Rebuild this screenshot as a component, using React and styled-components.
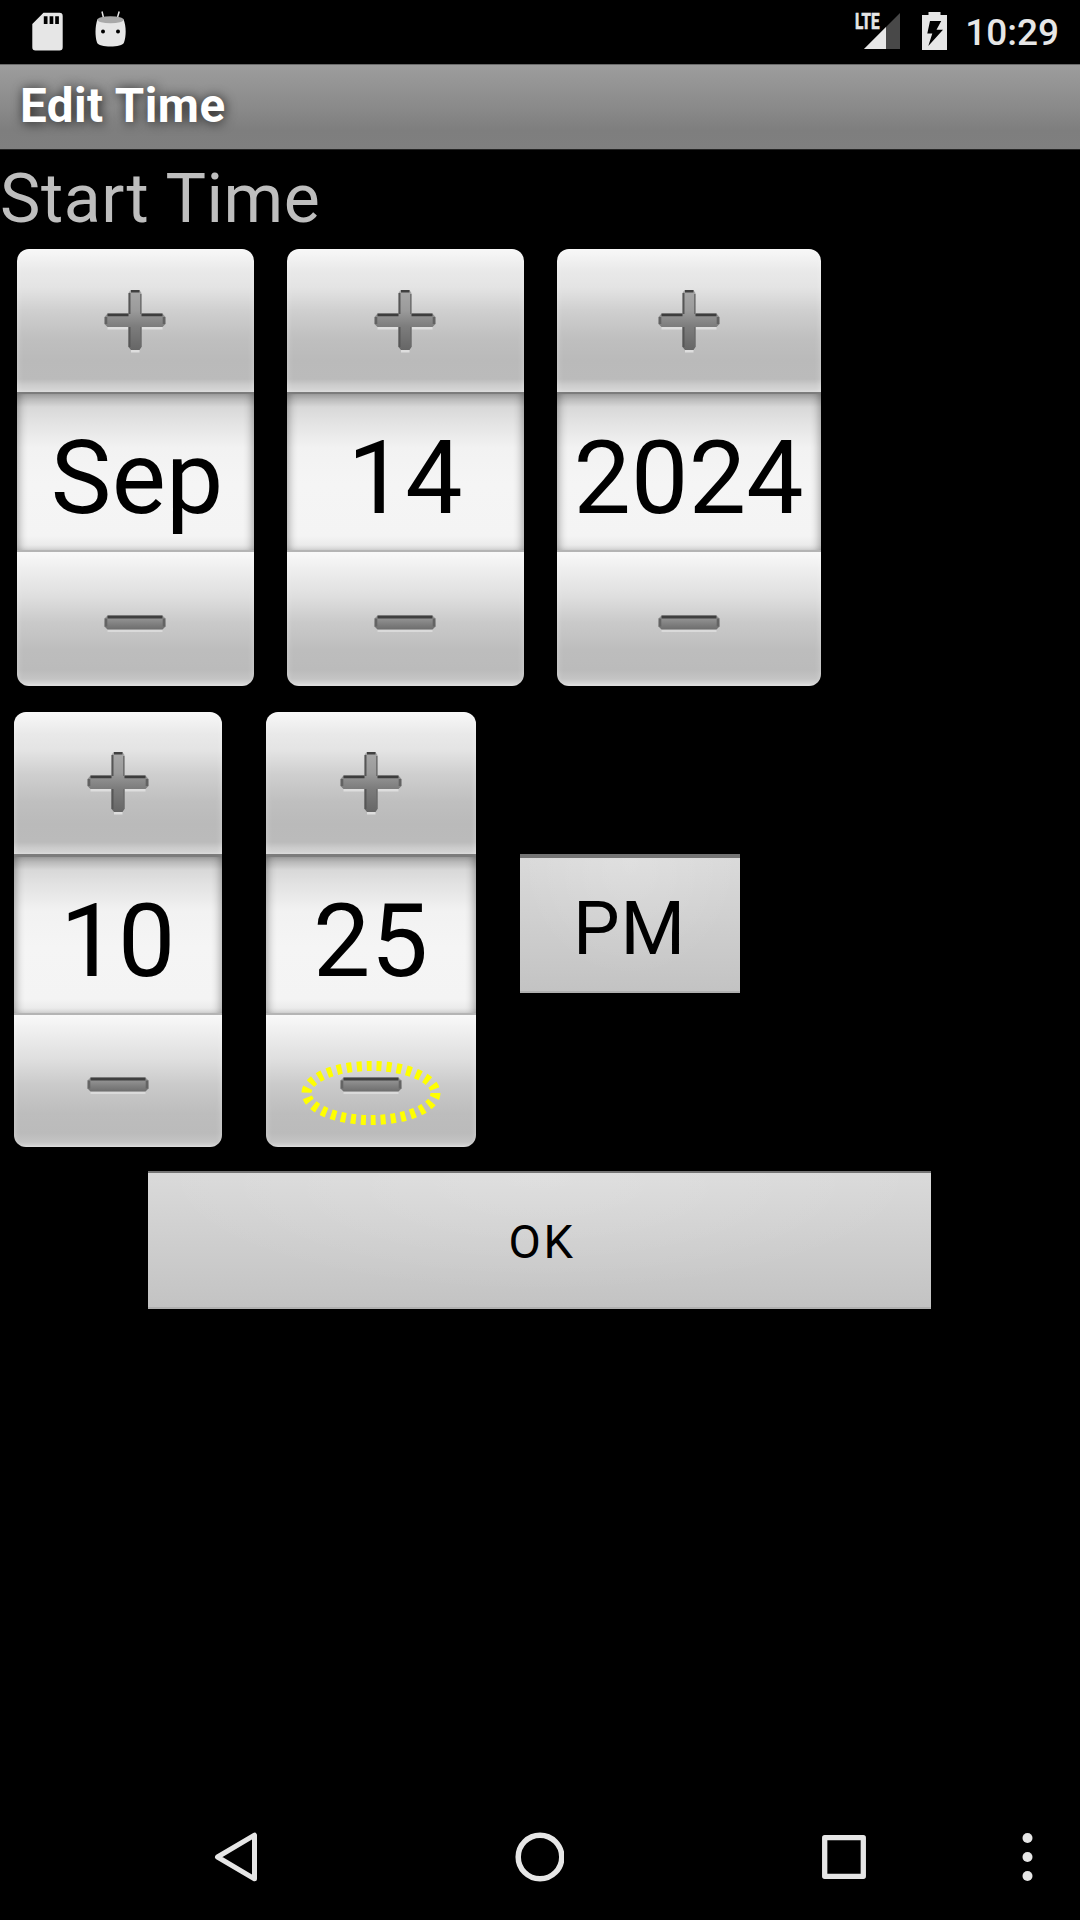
import React from "react";
import styled, { createGlobalStyle } from "styled-components";

const GlobalStyle = createGlobalStyle`
  * { box-sizing: border-box; }
  html, body { margin: 0; padding: 0; background: #000; }
  body { font-family: Roboto, "Noto Sans", sans-serif; }
  button { font-family: inherit; border: 0; padding: 0; margin: 0; }
  svg { display: block; }
`;

const Screen = styled.div`
  width: 1080px;
  height: 1920px;
  display: flex;
  flex-direction: column;
  background: #000;
  overflow: hidden;
`;

const StatusBar = styled.header`
  height: 64px;
  flex: none;
  display: flex;
  justify-content: space-between;
  align-items: flex-start;
  padding: 0 21px 0 32px;
`;

const StatusGroup = styled.div`
  display: flex;
  height: 64px;
  gap: ${(p) => p.$gap}px;
`;

const Clock = styled.time`
  color: #e6e6e6;
  font-size: 37px;
  font-weight: 500;
  line-height: 64px;
  padding-top: 1px;
  margin-left: -3px;
`;

const TitleBar = styled.h1`
  height: 86px;
  flex: none;
  margin: 0;
  padding: 0 20px;
  border-top: 1px solid #6a6a6a;
  border-bottom: 1px solid #242424;
  background: linear-gradient(#9d9d9d 0%, #8a8a8a 50%, #7e7e7e 78%, #7f7f7f 100%);
  color: #fff;
  font-size: 47.5px;
  font-weight: 700;
  line-height: 82px;
  letter-spacing: 0.5px;
  text-shadow: 1px 1px 12px rgba(0, 0, 0, 0.8);
`;

const Content = styled.main`
  flex: 1;
  display: flex;
  flex-direction: column;
  align-items: flex-start;
`;

const SectionLabel = styled.h2`
  margin: 0;
  height: 99px;
  color: #bebebe;
  font-size: 68px;
  font-weight: 400;
  line-height: 99px;
  letter-spacing: 0.55px;
`;

const PickerRow = styled.section`
  display: flex;
  align-items: flex-start;
  gap: ${(p) => p.$gap}px;
  padding-left: ${(p) => p.$left}px;
  margin-bottom: ${(p) => p.$bottom}px;
`;

const Picker = styled.div`
  width: ${(p) => p.$width}px;
  display: flex;
  flex-direction: column;
  border-radius: 12px;
  overflow: hidden;
`;

const StepButton = styled.button`
  display: flex;
  justify-content: center;
  align-items: flex-start;
  flex: none;
`;

const IncrementButton = styled(StepButton)`
  height: ${(p) => (p.$short ? 142 : 143)}px;
  padding-top: ${(p) => (p.$short ? 39 : 40)}px;
  background: linear-gradient(
    #f8f8f8 0,
    #e9e9e9 22px,
    #e4e4e4 38px,
    #cfcfcf 62px,
    #bfbfbf 90px,
    #bababa 112px,
    #bbbbbb 130px,
    #cccccc 136px,
    #d8d8d8 143px
  );
  box-shadow: inset 3px 0 5px -1px rgba(255, 255, 255, 0.2),
    inset -3px 0 5px -1px rgba(255, 255, 255, 0.2);
`;

const DecrementButton = styled(StepButton)`
  height: ${(p) => (p.$short ? 132 : 133.5)}px;
  padding-top: ${(p) => (p.$short ? 62 : 63)}px;
  background: linear-gradient(
    #f9f9f9 0,
    #efefef 16px,
    #dfdfdf 44px,
    #cacaca 70px,
    #bdbdbd 98px,
    #bbbbbb 118px,
    #c4c4c4 127px,
    #dcdcdc 133px
  );
  box-shadow: inset 3px 0 5px -1px rgba(255, 255, 255, 0.2),
    inset -3px 0 5px -1px rgba(255, 255, 255, 0.2);
`;

const Field = styled.div`
  height: ${(p) => (p.$short ? 161 : 160)}px;
  flex: none;
  border-top: ${(p) => (p.$short ? 3 : 2)}px solid #7c7c7c;
  border-bottom: 2px solid #b4b4b4;
  background: linear-gradient(
    #acacac 0,
    #b9b9b9 5px,
    #d8d8d8 13px,
    #e2e2e2 27px,
    #f2f2f2 54px,
    #f5f5f5 90px,
    #f4f4f4 142px,
    #e4e4e4 158px
  );
  box-shadow: inset 6px 0 8px -4px rgba(0, 0, 0, 0.32),
    inset -6px 0 8px -4px rgba(0, 0, 0, 0.32);
  color: #000;
  font-size: 102px;
  line-height: 168px;
  letter-spacing: 0.3px;
  text-align: center;
  text-indent: ${(p) => p.$indent || 0}px;
  white-space: nowrap;
`;

const FaceButton = styled.button`
  width: ${(p) => p.$width}px;
  height: ${(p) => p.$height}px;
  margin: ${(p) => p.$margin};
  border-top: ${(p) => p.$edge}px solid #747474;
  border-bottom: 2px solid #b0b0b0;
  background: radial-gradient(
      ellipse 50% 90% at 50% 0,
      rgba(255, 255, 255, 0.16),
      rgba(255, 255, 255, 0)
    ),
    linear-gradient(#dadada, #c3c3c3);
  color: #000;
  font-size: ${(p) => p.$font}px;
  line-height: 1;
  padding: ${(p) => p.$pad};
  letter-spacing: ${(p) => p.$track}px;
`;

const DecrementSlot = styled.div`
  position: relative;
  display: flex;
`;

const FocusRing = styled.svg`
  position: absolute;
  left: -39px;
  top: -17px;
  width: 140px;
  height: 66px;
  overflow: visible;
`;

const NavBar = styled.nav`
  height: 126px;
  flex: none;
  display: flex;
  align-items: center;
  padding-left: 211px;
`;

const NavKey = styled.button`
  display: flex;
  background: none;
  margin-right: ${(p) => p.$after}px;
`;

const SdCardIcon = () => (
  <svg width="32" height="64" viewBox="32 0 32 64">
    <path
      fillRule="evenodd"
      fill="#e6e6e6"
      d="M43.5 12.7H59.5a3.2 3.2 0 0 1 3.2 3.2V47.3a3.2 3.2 0 0 1-3.2 3.2H35.5a3.2 3.2 0 0 1-3.2-3.2V24ZM43.8 16.3V24h3.7v-7.7ZM49.6 16.3V24h3.7v-7.7ZM55.2 16.3V24h3.7v-7.7Z"
    />
  </svg>
);

const AndroidIcon = () => (
  <svg width="32" height="64" viewBox="95 0 32 64">
    <path d="M102 11.500L103.800 19M119.200 11.500L117 19" stroke="#e6e6e6" strokeWidth="1.500" />
    <path
      fill="#e6e6e6"
      d="M97.300 19.500C95 27 95 36 97 42.500C98.500 47.800 122.500 47.800 124 42.500C126.300 36 126.300 27 123.700 19.500Z"
    />
    <ellipse cx="110.500" cy="19.700" rx="13.200" ry="3.500" fill="#a9a9a9" />
    <circle cx="103" cy="31.500" r="2" fill="#000" />
    <circle cx="118" cy="31.500" r="2" fill="#000" />
  </svg>
);

const SignalIcon = () => (
  <svg width="46" height="64" viewBox="855 0 46 64">
    <path d="M900 13V49H864Z" fill="#484848" />
    <path d="M886 27V49H864Z" fill="#e6e6e6" />
    <text
      x="855"
      y="29"
      fontSize="22"
      fontWeight="700"
      fill="#e6e6e6"
      stroke="#e6e6e6"
      strokeWidth="0.7"
      textLength="24.500"
      lengthAdjust="spacingAndGlyphs"
    >
      LTE
    </text>
  </svg>
);

const BatteryIcon = () => (
  <svg width="25" height="64" viewBox="922 0 25 64">
    <path d="M928.500 12H940.500V15H947V50H922V15H928.500Z" fill="#e6e6e6" />
    <path d="M930 21H941.200L936.500 29.700H943L928.300 46L932.300 33.500H927.300Z" fill="#000" />
  </svg>
);

const IconGradient = ({ id }) => (
  <linearGradient id={id} x1="0" x2="0" y1="1" y2="61" gradientUnits="userSpaceOnUse">
    <stop offset="0" stopColor="#a8a8a8" />
    <stop offset="0.35" stopColor="#9a9a9a" />
    <stop offset="0.6" stopColor="#7d7d7d" />
    <stop offset="1" stopColor="#666" />
  </linearGradient>
);

const PlusIcon = ({ id }) => (
  <svg width="62" height="66" viewBox="0 0 62 66">
    <defs>
      <IconGradient id={id} />
    </defs>
    <path d="M27 61H35.500V63.500H27ZM3.500 38H24.500V40.500H3.500ZM37.500 38H58.500V40.500H37.500Z" fill="#dedede" />
    <path
      d="M26.500 1H35.500L37.500 4V24.500H58.500L61.500 28V35L58.500 38H37.500V58L35.500 61H27L24.500 58V38H3.500L.5 35V28L3.500 24.500H24.500V4Z"
      fill={`url(#${id})`}
    />
    <path d="M3.500 25.900H24.500M37.500 25.900H58.500" stroke="#3d3d3d" strokeWidth="2.800" />
    <path d="M27 2.200H35.500" stroke="#404040" strokeWidth="2.600" />
    <path d="M25.500 4V25M25.500 38V58" stroke="#565656" strokeWidth="2" />
    <path d="M36.800 5V25M36.800 38V58" stroke="#6c6c6c" strokeWidth="1.400" />
    <path d="M2 28V35M60 28V35" stroke="#626262" strokeWidth="2.600" />
  </svg>
);

const MinusIcon = ({ id }) => (
  <svg width="62" height="18" viewBox="0 0 62 18">
    <defs>
      <linearGradient id={id} x1="0" x2="0" y1="0" y2="1">
        <stop offset="0" stopColor="#9c9c9c" />
        <stop offset="1" stopColor="#6d6d6d" />
      </linearGradient>
    </defs>
    <path d="M3.500 14.500H58.500V17H3.500Z" fill="#dadada" />
    <path d="M3.500 .5H58.500L61.500 3.500V11.500L58.500 14.500H3.500L.5 11.500V3.500Z" fill={`url(#${id})`} />
    <path d="M3.500 2H58.500" stroke="#3f3f3f" strokeWidth="3" />
    <path d="M2 3.500V11.500M60 3.500V11.500" stroke="#646464" strokeWidth="2.600" />
  </svg>
);

function NumberPicker({ name, value, width, indent, short, focused }) {
  return (
    <Picker $width={width}>
      <IncrementButton $short={short} aria-label={`Increase ${name}`}>
        <PlusIcon id={`${name}-plus`} />
      </IncrementButton>
      <Field $short={short} $indent={indent}>
        {value}
      </Field>
      <DecrementButton $short={short} aria-label={`Decrease ${name}`}>
        <DecrementSlot>
          <MinusIcon id={`${name}-minus`} />
          {focused && (
            <FocusRing viewBox="0 0 140 66">
              <ellipse
                cx="70"
                cy="33"
                rx="64.500"
                ry="27"
                fill="none"
                stroke="#ff0"
                strokeWidth="10"
                strokeDasharray="5 5"
              />
            </FocusRing>
          )}
        </DecrementSlot>
      </DecrementButton>
    </Picker>
  );
}

const dateFields = [
  { name: "month", value: "Sep", width: 236.5, indent: 4 },
  { name: "day", value: "14", width: 236.5 },
  { name: "year", value: "2024", width: 263.5 },
];

const timeFields = [
  { name: "hour", value: "10", width: 208 },
  { name: "minute", value: "25", width: 209.5, focused: true },
];

export default function App() {
  return (
    <>
      <GlobalStyle />
      <Screen>
        <StatusBar>
          <StatusGroup $gap={31}>
            <SdCardIcon />
            <AndroidIcon />
          </StatusGroup>
          <StatusGroup $gap={21}>
            <SignalIcon />
            <BatteryIcon />
            <Clock>10:29</Clock>
          </StatusGroup>
        </StatusBar>
        <TitleBar>Edit Time</TitleBar>
        <Content>
          <SectionLabel>Start Time</SectionLabel>
          <PickerRow $left={17} $gap={33.5} $bottom={26.5}>
            {dateFields.map((f) => (
              <NumberPicker key={f.name} {...f} />
            ))}
          </PickerRow>
          <PickerRow $left={14} $gap={44} $bottom={24}>
            {timeFields.map((f) => (
              <NumberPicker key={f.name} short {...f} />
            ))}
            <FaceButton
              $width={220}
              $height={139}
              $margin="142px 0 0 0"
              $edge={4}
              $font={74}
              $pad="9px 0 0 0"
              $track={0.8}
            >
              PM
            </FaceButton>
          </PickerRow>
          <FaceButton
            $width={783}
            $height={138}
            $margin="0 0 0 148px"
            $edge={2}
            $font={47}
            $pad="3px 0 0 5px"
            $track={2.6}
          >
            OK
          </FaceButton>
        </Content>
        <NavBar>
          <NavKey aria-label="Back" $after={257}>
            <svg width="46" height="50" viewBox="0 0 46 50">
              <path
                d="M6.500 25L43.500 3.200V46.800Z"
                fill="none"
                stroke="#e6e6e6"
                strokeWidth="5"
                strokeLinejoin="round"
              />
            </svg>
          </NavKey>
          <NavKey aria-label="Home" $after={257}>
            <svg width="50" height="50" viewBox="0 0 50 50">
              <circle cx="26" cy="25" r="21.800" fill="none" stroke="#e6e6e6" strokeWidth="5.500" />
            </svg>
          </NavKey>
          <NavKey aria-label="Recent apps" $after={155}>
            <svg width="46" height="46" viewBox="0 0 46 46">
              <path
                d="M3.700 3.700H42.300V42.300H3.700Z"
                fill="none"
                stroke="#e6e6e6"
                strokeWidth="5.300"
                strokeLinejoin="round"
              />
            </svg>
          </NavKey>
          <NavKey aria-label="Menu" $after={0}>
            <svg width="12" height="50" viewBox="0 0 12 50">
              <g fill="#e6e6e6">
                <circle cx="5.500" cy="6" r="5" />
                <circle cx="5.500" cy="25" r="5" />
                <circle cx="5.500" cy="44" r="5" />
              </g>
            </svg>
          </NavKey>
        </NavBar>
      </Screen>
    </>
  );
}
